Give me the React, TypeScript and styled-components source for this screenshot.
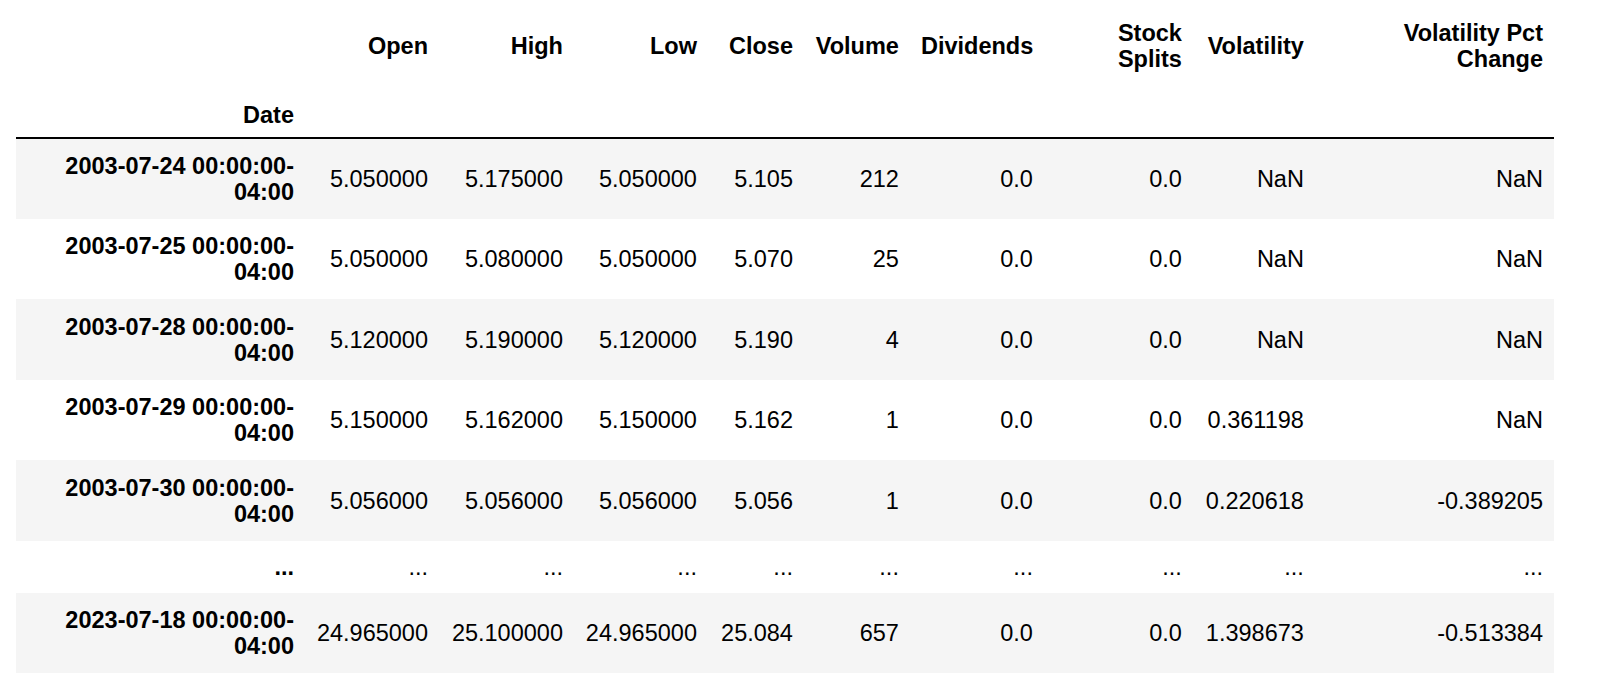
import styled, { createGlobalStyle } from 'styled-components'

const Global = createGlobalStyle`
  body { margin: 0; background: #fff; font-family: "Liberation Sans", Arial, sans-serif; color: #000; }
`

const Wrap = styled.div`
  padding: 0 16px;
`

const Table = styled.table`
  border-collapse: collapse;
  table-layout: fixed;
  width: 1538px;
  font-size: 23.5px;
  line-height: 26px;
`

const Col = styled.col<{ $w: number }>`
  width: ${p => (p.$w / 1538) * 100}%;
`

const Th = styled.th`
  text-align: right;
  font-weight: bold;
  padding: 0 11px;
  vertical-align: middle;
  white-space: nowrap;
`

const HeadRow = styled.tr<{ $h: number; $border?: boolean }>`
  height: ${p => p.$h}px;
  border-bottom: ${p => (p.$border ? '2px solid #000' : 'none')};
`

const Row = styled.tr<{ $striped: boolean; $h: number }>`
  height: ${p => p.$h}px;
  background: ${p => (p.$striped ? '#f5f5f5' : '#fff')};
`

const Td = styled.td`
  text-align: right;
  padding: 0 11px;
  vertical-align: middle;
  white-space: nowrap;
`

const widths = [289, 134, 135, 134, 96, 106, 134, 149, 122, 239]
const heights = [81, 80, 81, 80, 81, 52, 80]
const cols = ['Open', 'High', 'Low', 'Close', 'Volume', 'Dividends', 'Stock Splits', 'Volatility', 'Volatility Pct Change']

const rows: string[][] = [
  ['2003-07-24 00:00:00-04:00', '5.050000', '5.175000', '5.050000', '5.105', '212', '0.0', '0.0', 'NaN', 'NaN'],
  ['2003-07-25 00:00:00-04:00', '5.050000', '5.080000', '5.050000', '5.070', '25', '0.0', '0.0', 'NaN', 'NaN'],
  ['2003-07-28 00:00:00-04:00', '5.120000', '5.190000', '5.120000', '5.190', '4', '0.0', '0.0', 'NaN', 'NaN'],
  ['2003-07-29 00:00:00-04:00', '5.150000', '5.162000', '5.150000', '5.162', '1', '0.0', '0.0', '0.361198', 'NaN'],
  ['2003-07-30 00:00:00-04:00', '5.056000', '5.056000', '5.056000', '5.056', '1', '0.0', '0.0', '0.220618', '-0.389205'],
  ['...', '...', '...', '...', '...', '...', '...', '...', '...', '...'],
  ['2023-07-18 00:00:00-04:00', '24.965000', '25.100000', '24.965000', '25.084', '657', '0.0', '0.0', '1.398673', '-0.513384'],
]

function dateLabel(s: string) {
  if (s === '...') return s
  return (
    <>
      {s.slice(0, 20)}
      <br />
      {s.slice(20)}
    </>
  )
}

function headLabel(c: string) {
  if (c === 'Stock Splits') return (<>Stock<br />Splits</>)
  if (c === 'Volatility Pct Change') return (<>Volatility Pct<br />Change</>)
  return c
}

export default function App() {
  return (
    <Wrap>
      <Global />
      <Table>
        <colgroup>
          {widths.map((w, i) => (
            <Col key={i} $w={w} />
          ))}
        </colgroup>
        <thead>
          <HeadRow $h={92}>
            <Th />
            {cols.map(c => (
              <Th key={c}>{headLabel(c)}</Th>
            ))}
          </HeadRow>
          <HeadRow $h={46} $border>
            <Th>Date</Th>
            {cols.map(c => (
              <Th key={c} />
            ))}
          </HeadRow>
        </thead>
        <tbody>
          {rows.map((r, i) => (
            <Row key={i} $striped={i % 2 === 0} $h={heights[i]}>
              <Th>{dateLabel(r[0])}</Th>
              {r.slice(1).map((v, j) => (
                <Td key={j}>{v}</Td>
              ))}
            </Row>
          ))}
        </tbody>
      </Table>
    </Wrap>
  )
}
